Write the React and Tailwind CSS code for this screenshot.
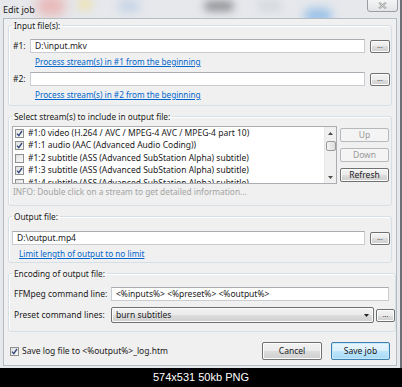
import React from "react";

const btnNormal =
  "flex items-center justify-center border border-[#707070] rounded-[2px] bg-[linear-gradient(#f2f2f2_0%,#ebebeb_50%,#dddddd_50%,#cfcfcf_100%)] text-[#1a1a1a] shadow-[inset_0_0_0_1px_#fcfcfc]";
const btnDisabled =
  "flex items-center justify-center border border-[#b5b9bc] rounded-[2px] bg-[#f4f4f4] text-[#9a9a9a]";
const btnDefault =
  "flex items-center justify-center border border-[#3c7fb1] rounded-[2px] bg-[linear-gradient(#eaf6fd_0%,#d9f0fc_50%,#bee6fd_50%,#a7d9f5_100%)] text-[#1a1a1a] shadow-[inset_0_0_0_1px_#c6e8fb]";

function Dots({ className }) {
  return (
    <div className={btnNormal + " " + className}>
      <span className="text-[7px] leading-none text-[#444] -mt-[2px]">...</span>
    </div>
  );
}

function TextBox({ className, children }) {
  return (
    <div
      className={
        "flex items-center bg-white border border-[#c9ccd1] border-t-[#abadb3] px-[4px] text-[8.5px] text-[#1a1a1a] whitespace-nowrap overflow-hidden " +
        className
      }
    >
      {children}
    </div>
  );
}

function Check({ checked }) {
  return (
    <div className="w-[9px] h-[9px] border border-[#8e8f8f] bg-[linear-gradient(135deg,#e0e0e0,#fbfbfb)] flex items-center justify-center shrink-0">
      {checked && (
        <svg width="7" height="7" viewBox="0 0 7 7">
          <path d="M1 3.6 L2.8 5.6 L6 1" fill="none" stroke="#36487a" strokeWidth="1.4" />
        </svg>
      )}
    </div>
  );
}

function Group({ title, className, children }) {
  return (
    <fieldset
      className={
        "border border-[#d5dfe5] rounded-[3px] shadow-[inset_1px_1px_0_#ffffff] mx-[4px] " +
        className
      }
    >
      <legend className="ml-[3px] px-[2px] text-[8.3px] leading-[11px] text-[#1a1a1a]">{title}</legend>
      {children}
    </fieldset>
  );
}

const items = [
  ["#1:0 video (H.264 / AVC / MPEG-4 AVC / MPEG-4 part 10)", true],
  ["#1:1 audio (AAC (Advanced Audio Coding))", true],
  ["#1:2 subtitle (ASS (Advanced SubStation Alpha) subtitle)", false],
  ["#1:3 subtitle (ASS (Advanced SubStation Alpha) subtitle)", true],
  ["#1:4 subtitle (ASS (Advanced SubStation Alpha) subtitle)", false],
];

export default function App() {
  return (
    <div className="w-[402px] h-[387px] bg-black flex flex-col font-['Noto_Sans',sans-serif] overflow-hidden">
      {/* window */}
      <div className="h-[368px] flex flex-col bg-[#e6e8ec] border-r-2 border-r-[#6b6f75] relative overflow-hidden">
        {/* title bar */}
        <div className="h-[18px] relative flex items-center pl-[3px] shrink-0 overflow-hidden">
          <div className="absolute left-[36px] top-[-4px] w-[30px] h-[20px] rounded-full bg-[#e9b7b7] blur-[6px]" />
          <div className="absolute left-[78px] top-[-2px] w-[14px] h-[12px] rounded-full bg-[#efe0a8] blur-[5px]" />
          <div className="absolute left-[118px] top-[0px] w-[22px] h-[12px] rounded-full bg-[#c5d3e6] blur-[5px]" />
          <div className="absolute left-[204px] top-[1px] w-[30px] h-[10px] rounded-full bg-[#8d8f93] blur-[4px]" />
          <div className="absolute left-[258px] top-[1px] w-[24px] h-[10px] rounded-full bg-[#d4d7db] blur-[4px]" />
          <div className="absolute left-[304px] top-[8px] w-[28px] h-[16px] rounded-full bg-[#9dc3e8] blur-[5px]" />
          <span className="relative text-[9px] text-[#222] leading-none">Edit job</span>
          <div className="absolute right-[2px] top-[-1px] w-[31px] h-[13px] border border-[#9a9ea4] rounded-b-[3px] bg-[linear-gradient(#f4f4f4,#e2e4e7)] flex items-center justify-center">
            <svg width="9" height="7" viewBox="0 0 9 7">
              <path d="M1 0.5 L8 6.5 M8 0.5 L1 6.5" stroke="#9a9a9a" strokeWidth="2" />
              <path d="M1 0.5 L8 6.5 M8 0.5 L1 6.5" stroke="#f2f2f2" strokeWidth="0.7" />
            </svg>
          </div>
        </div>

        {/* client */}
        <div className="flex-1 mx-[3px] mb-[2px] bg-[#f0f0f0] border border-[#b4bcc4] flex flex-col">
          {/* Input files */}
          <Group title="Input file(s):" className="mt-[1px] h-[86px]">
            <div className="flex items-center mt-[8px] h-[14px] pl-[4px]">
              <span className="w-[17px] text-[8.5px] text-[#1a1a1a]">#1:</span>
              <TextBox className="w-[335px] h-[14px]">D:\input.mkv</TextBox>
              <Dots className="ml-[5px] w-[20px] h-[13px]" />
            </div>
            <div className="h-[11px] mt-[3px] pl-[26px] flex items-center">
              <span className="text-[8.2px] leading-[11px] text-[#0066cc] underline">Process stream(s) in #1 from the beginning</span>
            </div>
            <div className="flex items-center mt-[5px] h-[14px] pl-[4px]">
              <span className="w-[17px] text-[8.5px] text-[#1a1a1a]">#2:</span>
              <TextBox className="w-[335px] h-[14px]"></TextBox>
              <Dots className="ml-[5px] w-[20px] h-[13px]" />
            </div>
            <div className="h-[11px] mt-[3px] pl-[26px] flex items-center">
              <span className="text-[8.2px] leading-[11px] text-[#0066cc] underline">Process stream(s) in #2 from the beginning</span>
            </div>
          </Group>

          {/* Streams */}
          <Group title="Select stream(s) to include in output file:" className="mt-[5px] h-[95px]">
            <div className="flex mt-[4px] pl-[3px]">
              <div className="w-[325px] h-[58px] bg-white border border-[#abadb3] flex overflow-hidden">
                <div className="flex-1 flex flex-col overflow-hidden">
                  {items.map(([t, c], i) => (
                    <div key={i} className="h-[12.5px] shrink-0 flex items-center pl-[2px] gap-[4px] whitespace-nowrap">
                      <Check checked={c} />
                      <span className="text-[8.5px] text-[#1a1a1a]">{t}</span>
                    </div>
                  ))}
                </div>
                <div className="w-[12px] h-full bg-[#f0f0f0] border-l border-[#e6e6e6] flex flex-col items-center">
                  <div className="h-[12px] flex items-center justify-center">
                    <svg width="5" height="3" viewBox="0 0 5 3"><path d="M0 3 L2.5 0 L5 3Z" fill="#4d4d4d" /></svg>
                  </div>
                  <div className="w-[10px] h-[10px] mt-[2px] rounded-[2px] border border-[#9a9a9a] bg-[linear-gradient(90deg,#f3f3f3,#dcdcdc)]" />
                  <div className="flex-1" />
                  <div className="h-[12px] flex items-center justify-center">
                    <svg width="5" height="3" viewBox="0 0 5 3"><path d="M0 0 L2.5 3 L5 0Z" fill="#4d4d4d" /></svg>
                  </div>
                </div>
              </div>
              <div className="ml-[3px] flex flex-col gap-[6px] pt-[2px]">
                <div className={btnDisabled + " w-[49px] h-[14px] text-[8.5px]"}>Up</div>
                <div className={btnDisabled + " w-[49px] h-[14px] text-[8.5px]"}>Down</div>
                <div className={btnNormal + " w-[49px] h-[14px] text-[8.5px]"}>Refresh</div>
              </div>
            </div>
            <div className="pl-[4px] mt-[2px] h-[11px] text-[8.3px] leading-[11px] text-[#a3a3a3] whitespace-nowrap">
              INFO: Double click on a stream to get detailed information...
            </div>
          </Group>

          {/* Output file */}
          <Group title="Output file:" className="mt-[5px] h-[52px]">
            <div className="flex items-center mt-[9px] pl-[3px]">
              <TextBox className="w-[353px] h-[14px]">D:\output.mp4</TextBox>
              <Dots className="ml-[5px] w-[20px] h-[13px]" />
            </div>
            <div className="h-[11px] mt-[3px] pl-[10px] flex items-center">
              <span className="text-[8.2px] leading-[11px] text-[#0066cc] underline">Limit length of output to no limit</span>
            </div>
          </Group>

          {/* Encoding */}
          <Group title="Encoding of output file:" className="mt-[5px] h-[64px]">
            <div className="flex items-center mt-[8px] pl-[5px] h-[14px]">
              <span className="w-[97px] text-[8.5px] text-[#1a1a1a]">FFMpeg command line:</span>
              <TextBox className="w-[278px] h-[14px]">&lt;%inputs%&gt; &lt;%preset%&gt; &lt;%output%&gt;</TextBox>
            </div>
            <div className="flex items-center mt-[6px] pl-[5px] h-[16px]">
              <span className="w-[97px] text-[8.5px] text-[#1a1a1a]">Preset command lines:</span>
              <div className={btnNormal + " w-[263px] h-[16px] !justify-between px-[4px]"}>
                <span className="text-[8.5px]">burn subtitles</span>
                <svg width="5" height="3" viewBox="0 0 5 3"><path d="M0 0 L2.5 3 L5 0Z" fill="#222" /></svg>
              </div>
              <Dots className="ml-[2px] w-[19px] h-[13px]" />
            </div>
          </Group>

          {/* bottom */}
          <div className="flex items-center mt-[10px] pl-[6px] pr-[6px]">
            <Check checked />
            <span className="ml-[3px] text-[8.5px] text-[#1a1a1a]">Save log file to &lt;%output%&gt;_log.htm</span>
            <div className="flex-1" />
            <div className={btnNormal + " w-[60px] h-[18px] text-[8.5px]"}>Cancel</div>
            <div className={btnDefault + " ml-[9px] w-[59px] h-[18px] text-[8.5px]"}>Save job</div>
          </div>
        </div>
      </div>
      <div className="flex-1 flex items-center justify-center text-white text-[11px] font-['Liberation_Sans',sans-serif]">
        574x531 50kb PNG
      </div>
    </div>
  );
}
